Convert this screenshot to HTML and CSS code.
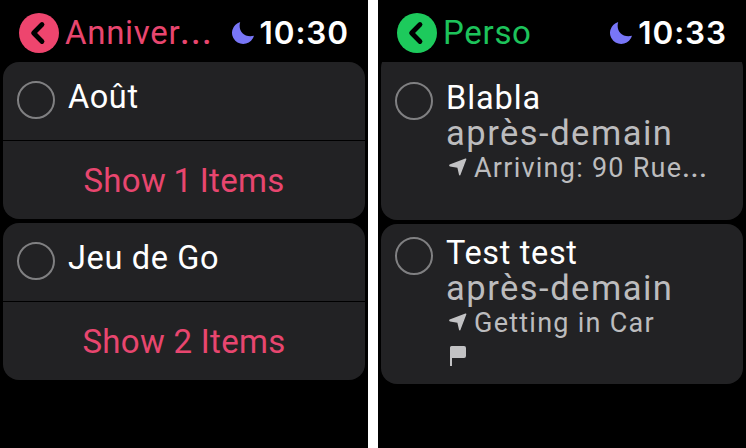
FILE: index.html
```html
<!DOCTYPE html>
<html lang="fr">
<head>
<meta charset="utf-8">
<title>Rappels</title>
<link rel="stylesheet" href="styles.css">
</head>
<body>
<main class="screens">
  <section class="watch watch--pink">
    <header class="bar">
      <svg class="back" viewBox="0 0 40 40"><circle cx="20" cy="20" r="20"/><path d="M23 11.5 L14.6 20 L23 28.5"/></svg>
      <h1 class="title">Anniver<span class="dots dots--title">...</span></h1>
      <svg class="moon" viewBox="0 0 22 22"><path d="M8.2 0 C5.6 8.8 12.2 16.2 22 13.8 A11.2 11.2 0 1 1 8.2 0Z"/></svg>
      <time class="time">10:30</time>
    </header>
    <div class="list">
      <article class="card">
        <div class="item item--single">
          <span class="check"></span>
          <div class="name">Août</div>
        </div>
        <div class="show show--one">Show 1 Items</div>
      </article>
      <article class="card">
        <div class="item item--single">
          <span class="check"></span>
          <div class="name">Jeu de Go</div>
        </div>
        <div class="show">Show 2 Items</div>
      </article>
    </div>
  </section>
  <section class="watch watch--green">
    <header class="bar">
      <svg class="back" viewBox="0 0 40 40"><circle cx="20" cy="20" r="20"/><path d="M23 11.5 L14.6 20 L23 28.5"/></svg>
      <h1 class="title">Perso</h1>
      <svg class="moon" viewBox="0 0 22 22"><path d="M8.2 0 C5.6 8.8 12.2 16.2 22 13.8 A11.2 11.2 0 1 1 8.2 0Z"/></svg>
      <time class="time">10:33</time>
    </header>
    <div class="list">
      <article class="card card--scrolled">
        <div class="item">
          <span class="check"></span>
          <div class="details">
            <div class="name name--wide">Blabla</div>
            <div class="due">après-demain</div>
            <div class="place"><svg class="arrow" viewBox="0 0 18 18"><path d="M0.6 6.6 L16.4 0.5 Q17.7 0.2 17.3 1.6 L11.4 16.9 Q10.6 18 10 16.7 L8.4 9.7 L1 8.4 Q-0.5 7.6 0.6 6.6Z"/></svg><span class="where">Arriving: 90 Rue<span class="dots">...</span></span></div>
          </div>
        </div>
      </article>
      <article class="card card--detail">
        <div class="item">
          <span class="check"></span>
          <div class="details">
            <div class="name">Test test</div>
            <div class="due">après-demain</div>
            <div class="place"><svg class="arrow" viewBox="0 0 18 18"><path d="M0.6 6.6 L16.4 0.5 Q17.7 0.2 17.3 1.6 L11.4 16.9 Q10.6 18 10 16.7 L8.4 9.7 L1 8.4 Q-0.5 7.6 0.6 6.6Z"/></svg><span class="where">Getting in Car</span></div>
            <svg class="flag" viewBox="0 0 16 20"><path d="M0 1.5 Q0 0 1.5 0 H14 Q16 0 16 2 V10 Q16 12 14 12 H2 V20 H0Z"/></svg>
          </div>
        </div>
      </article>
    </div>
  </section>
</main>
</body>
</html>
```
FILE: styles.css
```css
* { box-sizing: border-box; }
body { margin: 0; background: #fff; font-family: Roboto, "Liberation Sans", sans-serif; }
.screens { display: flex; gap: 10px; width: 746px; height: 448px; overflow: hidden; }
.watch { width: 368px; height: 448px; background: #000; color: #fff; display: flex; flex-direction: column; }
.watch--pink { --accent: #ee456e; --accent-text: #e8466f; }
.watch--green { --accent: #1dca5c; --accent-text: #1dc35b; }

.bar { height: 62px; padding: 4px 20px 0 19px; display: flex; align-items: center; flex: none; }
.back { width: 40px; height: 40px; flex: none; fill: var(--accent); }
.back path { fill: none; stroke: #000; stroke-width: 4.8; stroke-linecap: round; stroke-linejoin: round; }
.title { margin: 0 auto 0 6px; font-size: 33px; line-height: 38px; font-weight: 400; letter-spacing: 0.7px; color: var(--accent-text); white-space: nowrap; }
.dots { font-weight: 500; letter-spacing: 1px; }
.dots--title { letter-spacing: 1.8px; }
.moon { width: 22px; height: 22px; fill: #7876f7; margin-right: 6px; flex: none; }
.time { font: 600 31.5px/38px Inter, sans-serif; letter-spacing: 0.9px; margin-right: -1px; white-space: nowrap; }

.list { flex: 1; overflow: hidden; padding: 0 3px; display: flex; flex-direction: column; gap: 4px; }
.card { background: #222224; border-radius: 16px; flex: none; overflow: hidden; }
.card--scrolled { height: 168px; margin-top: -10px; padding-top: 28px; }
.card--detail { height: 160px; padding-top: 11px; }
.item { display: flex; gap: 13px; padding-left: 14px; }
.item--single { height: 79px; padding-top: 17px; border-bottom: 1px solid #000; }
.check { width: 38px; height: 38px; margin-top: 2px; border: 2px solid #808082; border-radius: 50%; flex: none; }
.name { font-size: 32.5px; line-height: 36px; letter-spacing: 0.65px; white-space: nowrap; }
.name--wide { letter-spacing: 0.9px; }
.show { height: 78px; padding-top: 1px; line-height: 78px; font-size: 33px; letter-spacing: 0.3px; text-align: center; color: var(--accent-text); }
.show--one { word-spacing: -1px; }
.due { font-size: 34.5px; line-height: 35px; margin-bottom: 1px; letter-spacing: 1.5px; color: #bcbcbe; white-space: nowrap; }
.place { display: flex; color: #bcbcbe; font-size: 27px; line-height: 32px; letter-spacing: 1.25px; white-space: nowrap; }
.arrow { width: 18px; height: 18px; margin: 6px 7px 0 3px; fill: #c2c2c4; flex: none; }
.flag { display: block; width: 16px; height: 20px; margin: 7px 0 0 4px; fill: #c2c2c4; }
```
